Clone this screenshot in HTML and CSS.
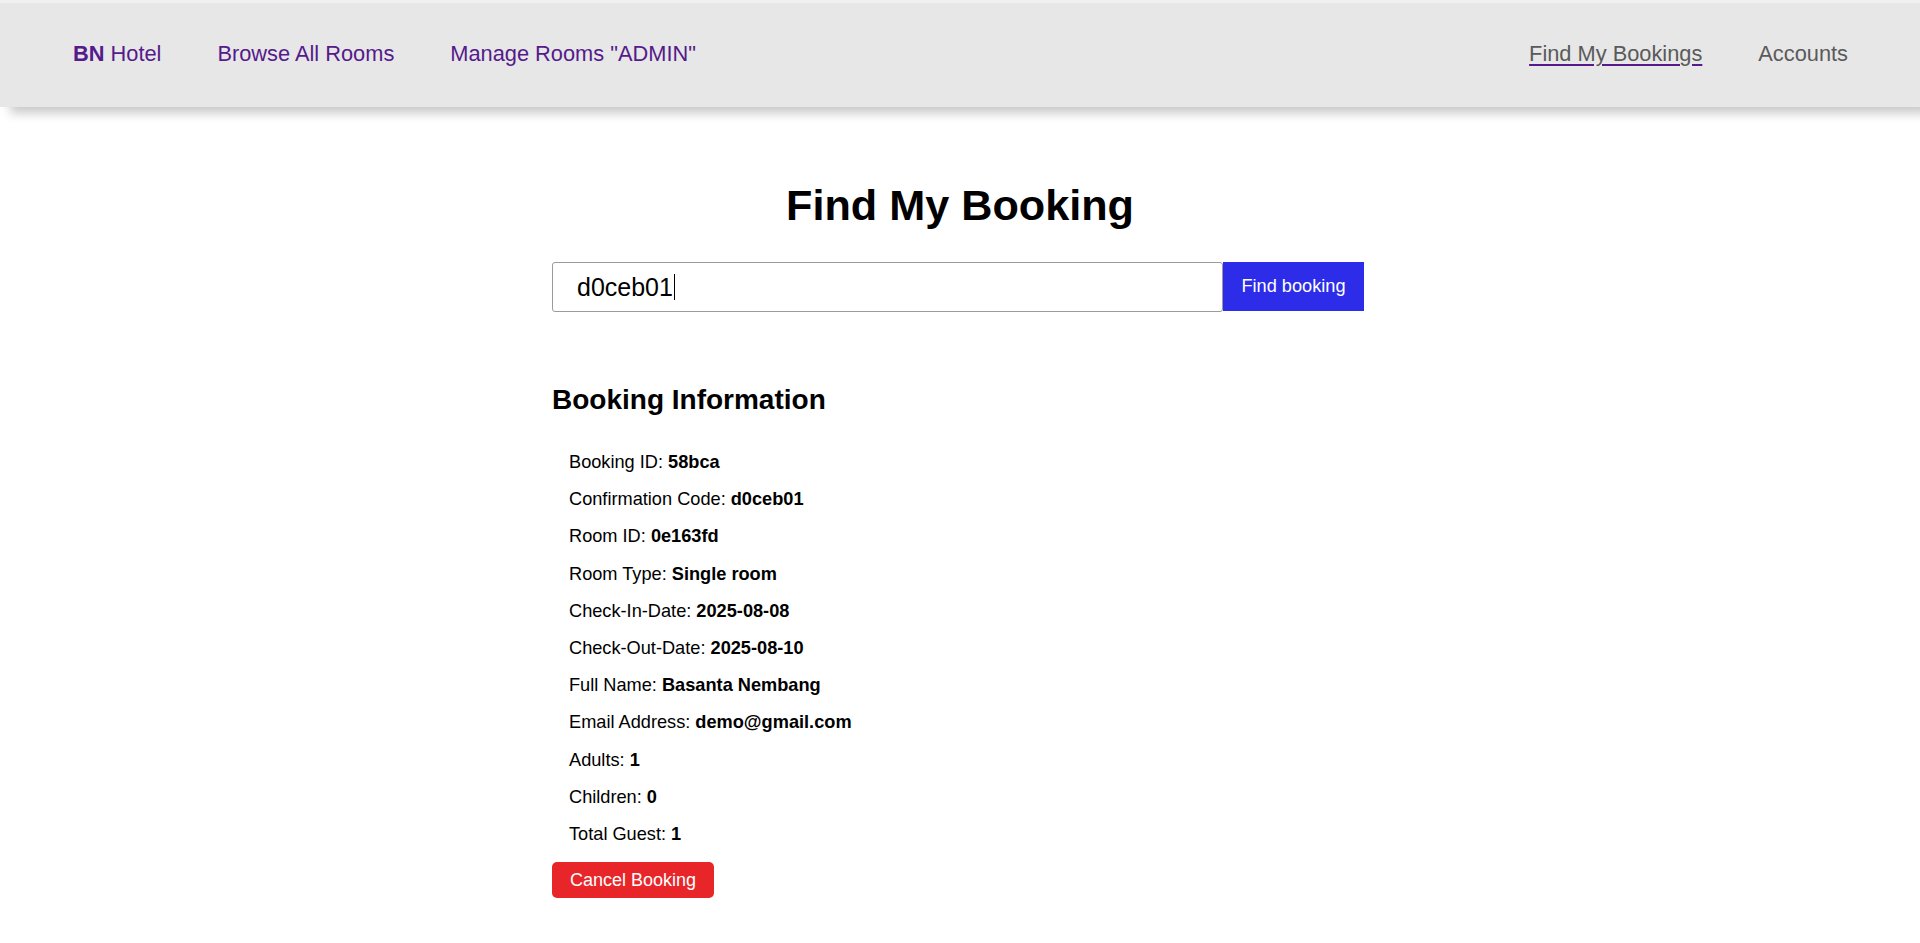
FILE: index.html
```html
<!DOCTYPE html>
<html lang="en">
<head>
<meta charset="utf-8">
<title>Find My Booking</title>
<link rel="stylesheet" href="styles.css">
</head>
<body>
<nav class="navbar">
  <div class="nav-group">
    <a class="nav-link brand" href="#"><b>BN</b> Hotel</a>
    <a class="nav-link" href="#">Browse All Rooms</a>
    <a class="nav-link" href="#">Manage Rooms "ADMIN"</a>
  </div>
  <div class="nav-group">
    <a class="nav-link nav-right active" href="#">Find My Bookings</a>
    <a class="nav-link nav-right" href="#">Accounts</a>
  </div>
</nav>
<main class="container">
  <h1 class="title">Find My Booking</h1>
  <div class="search-row">
    <div class="search-input"><span>d0ceb01</span><span class="caret"></span></div>
    <button class="find-btn">Find booking</button>
  </div>
  <h2 class="info-title">Booking Information</h2>
  <ul class="info-list">
    <li>Booking ID: <b>58bca</b></li>
    <li>Confirmation Code: <b>d0ceb01</b></li>
    <li>Room ID: <b>0e163fd</b></li>
    <li>Room Type: <b>Single room</b></li>
    <li>Check-In-Date: <b>2025-08-08</b></li>
    <li>Check-Out-Date: <b>2025-08-10</b></li>
    <li>Full Name: <b>Basanta Nembang</b></li>
    <li>Email Address: <b>demo@gmail.com</b></li>
    <li>Adults: <b>1</b></li>
    <li>Children: <b>0</b></li>
    <li>Total Guest: <b>1</b></li>
  </ul>
  <button class="cancel-btn">Cancel Booking</button>
</main>
</body>
</html>
```
FILE: styles.css
```css
* { box-sizing: border-box; }
html, body { margin: 0; padding: 0; }
body {
  font-family: "Liberation Sans", Arial, sans-serif;
  background: #ffffff;
  color: #000;
  border-top: 3px solid #f0f0f2;
  overflow: hidden;
}
.navbar {
  height: 104px;
  background: #e7e7e7;
  display: flex;
  align-items: center;
  justify-content: space-between;
  padding: 0 72px 2px 73px;
  box-shadow: 10px 6px 10px rgba(0,0,0,0.22);
  position: relative;
}
.nav-group {
  display: flex;
  gap: 56px;
  align-items: center;
}
.nav-link {
  font-size: 21.8px;
  color: #551a8b;
  text-decoration: none;
}
.nav-right { color: #5a5a5a; }
.nav-right.active {
  text-decoration: underline;
  text-decoration-color: #551a8b;
  text-underline-offset: 3px;
}
.container {
  width: 812px;
  margin: 0 0 0 calc(50% - 408px);
  padding-top: 73px;
}
.title {
  margin: 0 -4px 0 0;
  text-align: center;
  font-size: 43.2px;
  font-weight: bold;
  line-height: 50px;
}
.search-row {
  display: flex;
  margin-top: 32px;
  height: 50px;
}
.search-input {
  flex: 1;
  border: 1px solid #9a9aa0;
  border-radius: 3px;
  display: flex;
  align-items: center;
  padding-left: 24px;
  font-size: 25px;
}
.caret {
  display: inline-block;
  width: 1px;
  height: 26px;
  background: #000;
  margin-left: 1px;
}
.find-btn {
  width: 141px;
  height: 49px;
  border: none;
  background: #2c2ce9;
  color: #fff;
  font-family: "Liberation Sans", Arial, sans-serif;
  font-size: 18.2px;
  padding: 0;
}
.info-title {
  margin: 72px 0 0;
  font-size: 28px;
  line-height: 32px;
  font-weight: bold;
}
.info-list {
  list-style: none;
  margin: 28px 0 0;
  padding: 0 0 0 17px;
}
.info-list li {
  font-size: 18.2px;
  line-height: 37.2px;
}
.cancel-btn {
  margin-top: 9px;
  border: none;
  border-radius: 5px;
  background: #e8262a;
  color: #fff;
  font-family: "Liberation Sans", Arial, sans-serif;
  font-size: 18px;
  height: 36px;
  padding: 0;
  width: 162px;
}
```
